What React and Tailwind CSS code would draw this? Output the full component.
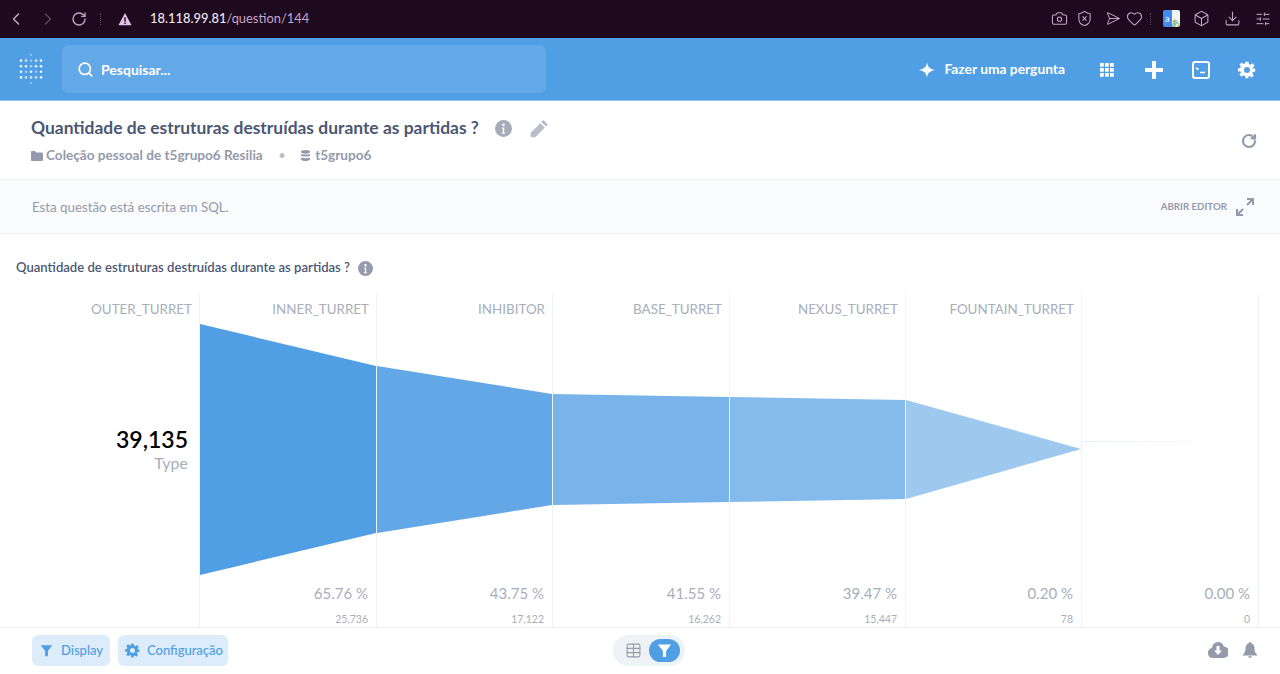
import React from "react";
import { ChevronLeft, ChevronRight, RotateCw, Camera, ShieldX, Send, Heart, Box, Download, SlidersHorizontal, Search, Table } from "lucide-react";

const Info = ({ className }) => (
  <svg viewBox="0 0 16 16" className={className} fill="currentColor">
    <path fillRule="evenodd" d="M8 0a8 8 0 1 1 0 16A8 8 0 0 1 8 0zm0 3.200a1.300 1.300 0 1 0 0 2.600 1.300 1.300 0 0 0 0-2.600zM6.600 7v1h.7v4H6.400v1h3.200v-1h-.9V7z" />
  </svg>
);
const Gear = ({ className }) => (
  <svg viewBox="0 0 24 24" className={className} fill="currentColor">
    <path fillRule="evenodd" d="M10 1h4l.6 3.200 1.900.8 2.700-1.900 2.800 2.800-1.900 2.700.8 1.900L23 10v4l-3.100.6-.8 1.900 1.900 2.700-2.800 2.800-2.700-1.900-1.900.8L14 23h-4l-.6-3.100-1.900-.8-2.700 1.900-2.800-2.800 1.900-2.700-.8-1.900L0 14v-4l3.100-.6.8-1.900L2 4.900l2.800-2.800 2.700 1.900 1.900-.8zM12 8a4 4 0 1 0 0 8 4 4 0 0 0 0-8z" />
  </svg>
);
const Funnel = ({ className }) => (
  <svg viewBox="0 0 16 16" className={className} fill="currentColor">
    <path d="M1 1.500h14L9.700 8.500V15H6.300V8.500z" />
  </svg>
);
const Logo = () => {
  const dots = [
    [2,0,.3],[2,1,.4],
    [0,1,.9],[1,1,.75],[3,1,.75],[4,1,.9],
    [0,2,.9],[1,2,.9],[2,2,.55],[3,2,.9],[4,2,.9],
    [0,3,.9],[1,3,.45],[2,3,.9],[3,3,.45],[4,3,.9],
    [0,4,.9],[1,4,.7],[2,4,.7],[3,4,.7],[4,4,.9],
    [2,5,.3],
  ];
  return (
    <svg viewBox="0 0 24 32" className="h-[32px] w-[24px]">
      {dots.map(([x, y, o], i) => (
        <circle key={i} cx={2 + x * 5} cy={2 + y * 5.600} r="1.300" fill="#fff" opacity={o} />
      ))}
    </svg>
  );
};

const cols = [
  { w: "w-[200px]", label: "OUTER_TURRET" },
  { w: "w-[177px]", label: "INNER_TURRET", pct: "65.76 %", n: "25,736" },
  { w: "w-[176px]", label: "INHIBITOR", pct: "43.75 %", n: "17,122" },
  { w: "w-[177px]", label: "BASE_TURRET", pct: "41.55 %", n: "16,262" },
  { w: "w-[176px]", label: "NEXUS_TURRET", pct: "39.47 %", n: "15,447" },
  { w: "w-[176px]", label: "FOUNTAIN_TURRET", pct: "0.20 %", n: "78" },
  { w: "w-[177px]", label: "", pct: "0.00 %", n: "0" },
];

export default function App() {
  return (
    <div className="flex h-[674px] w-[1280px] flex-col overflow-hidden bg-white font-['Lato','Noto_Sans',sans-serif]">
      <div className="flex h-[38px] shrink-0 items-center bg-[#1e0a1f] pb-[1px] pl-[6px] pr-[9px] text-[#c5a5c9]">
        <ChevronLeft className="h-[20px] w-[20px]" strokeWidth={1.8} />
        <ChevronRight className="ml-[12px] h-[20px] w-[20px] text-[#5b465e]" strokeWidth={1.8} />
        <RotateCw className="ml-[13px] h-[16px] w-[16px]" strokeWidth={2} />
        <div className="ml-[13px] h-[12px] border-l border-dotted border-[#5b465e]" />
        <svg viewBox="0 0 16 16" className="ml-[17px] h-[14px] w-[14px] text-[#e0bfe4]" fill="currentColor">
          <path fillRule="evenodd" d="M8 1l7.500 14H.5zM7.200 6v5h1.600V6zm0 6v1.600h1.600V12z" />
        </svg>
        <span className="ml-[18px] text-[12.900px] font-medium text-[#f0e6f1]">18.118.99.81</span>
        <span className="text-[12.900px] text-[#c5a5c9]">/question/144</span>
        <div className="ml-auto flex items-center">
          <Camera className="h-[17px] w-[17px]" strokeWidth={1.5} />
          <ShieldX className="ml-[8px] h-[17px] w-[17px]" strokeWidth={1.5} />
          <Send className="ml-[10px] h-[15px] w-[15px] rotate-45" strokeWidth={1.5} />
          <Heart className="ml-[8px] h-[17px] w-[17px]" strokeWidth={1.5} />
          <div className="ml-[7px] h-[12px] border-l border-dotted border-[#5b465e]" />
          <div className="ml-[12px] flex h-[17px] w-[17px] overflow-hidden rounded-[2px]">
            <div className="flex w-1/2 items-center justify-center bg-[#3f8cf0] text-[9px] leading-none text-white">a</div>
            <div className="flex w-1/2 items-end justify-center bg-[#f4f4f4] text-[9px] leading-none text-[#4c9a3c]">あ</div>
          </div>
          <Box className="ml-[13px] h-[17px] w-[17px]" strokeWidth={1.5} />
          <Download className="ml-[14px] h-[17px] w-[17px]" strokeWidth={1.5} />
          <SlidersHorizontal className="ml-[14px] h-[16px] w-[16px]" strokeWidth={1.5} />
        </div>
      </div>

      <div className="flex h-[63px] shrink-0 items-center border-b border-[#8fc2ee] bg-[#509ee3] pl-[19px] pr-[24px] text-white">
        <Logo />
        <div className="ml-[19px] flex h-[48px] w-[484px] items-center rounded-[6px] bg-[#63a8e7] pl-[15px]">
          <Search className="h-[17px] w-[17px]" strokeWidth={2.4} />
          <span className="ml-[7px] text-[14px] font-bold">Pesquisar...</span>
        </div>
        <div className="ml-auto mt-[1px] flex items-center">
          <svg viewBox="0 0 16 16" className="h-[16px] w-[16px]" fill="currentColor">
            <path d="M8 0c.6 4.800 2.600 7 8 8-5.400 1-7.400 3.200-8 8-.6-4.800-2.600-7-8-8 5.400-1 7.400-3.200 8-8z" />
          </svg>
          <span className="ml-[9px] text-[13.800px] font-bold">Fazer uma pergunta</span>
          <svg viewBox="0 0 14 14" className="ml-[35px] h-[14px] w-[14px]" fill="currentColor">
            {[0, 5, 10].flatMap((y) => [0, 5, 10].map((x) => <rect key={`${x}-${y}`} x={x} y={y} width="3.800" height="3.800" rx=".5" />))}
          </svg>
          <svg viewBox="0 0 18 18" className="ml-[31px] h-[18px] w-[18px]" fill="currentColor">
            <path d="M7 0h4v7h7v4h-7v7H7v-7H0V7h7z" />
          </svg>
          <svg viewBox="0 0 18 18" className="ml-[29px] h-[18px] w-[18px]" fill="none" stroke="currentColor" strokeWidth="2">
            <rect x="1" y="1" width="16" height="16" rx="2" />
            <path d="M4 7l2.500 1.500M8 11.500h5" strokeWidth="1.600" />
          </svg>
          <Gear className="ml-[28px] h-[18px] w-[18px]" />
        </div>
      </div>

      <div className="flex h-[79px] shrink-0 items-center justify-between border-b border-[#eef0f2] pl-[31px] pr-[23px]">
        <div>
          <div className="flex items-center pt-[1px]">
            <span className="text-[17.450px] font-bold text-[#4c5773]">Quantidade de estruturas destruídas durante as partidas ?</span>
            <Info className="ml-[16px] h-[17px] w-[17px] text-[#a6adba]" />
            <svg viewBox="0 0 16 16" className="ml-[18px] h-[19px] w-[19px] text-[#b8bdc8]" fill="currentColor">
              <path d="M11.300.9l3.800 3.800-1.700 1.700-3.800-3.800zM8.700 3.500l3.800 3.800L4.400 15.400H.6v-3.800z" />
            </svg>
          </div>
          <div className="mt-[4px] flex items-center text-[13.600px] font-bold text-[#949aab]">
            <svg viewBox="0 0 12 10" className="h-[10px] w-[12px]" fill="currentColor">
              <path d="M0 1a1 1 0 0 1 1-1h3l1 1.500h6a1 1 0 0 1 1 1V9a1 1 0 0 1-1 1H1a1 1 0 0 1-1-1z" />
            </svg>
            <span className="ml-[3px]">Coleção pessoal de t5grupo6 Resilia</span>
            <span className="ml-[16px] text-[11px] text-[#b8bdc8]">•</span>
            <svg viewBox="0 0 10 12" className="ml-[15px] h-[11px] w-[11px]" fill="currentColor">
              <ellipse cx="5" cy="2" rx="5" ry="2" />
              <path d="M0 4c1 1.300 9 1.300 10 0v2c-1 1.500-9 1.500-10 0zM0 8c1 1.300 9 1.300 10 0v2c-1 2.600-9 2.600-10 0z" />
            </svg>
            <span className="ml-[4px]">t5grupo6</span>
          </div>
        </div>
        <RotateCw className="mt-[1px] h-[16px] w-[16px] text-[#949aab]" strokeWidth={3.2} />
      </div>

      <div className="flex h-[54px] shrink-0 items-center justify-between border-b border-[#eef0f2] bg-[#f9fbfc] pl-[32px] pr-[26px]">
        <span className="pt-[2px] text-[13.300px] text-[#949aab]">Esta questão está escrita em SQL.</span>
        <div className="flex items-center">
          <span className="text-[9.700px] font-bold text-[#949aab]">ABRIR EDITOR</span>
          <svg viewBox="0 0 18 18" className="ml-[9px] h-[18px] w-[18px] text-[#949aab]" fill="none" stroke="currentColor" strokeWidth="2">
            <path d="M11 1h6v6M17 1l-6 6M7 17H1v-6M1 17l6-6" />
          </svg>
        </div>
      </div>

      <div className="flex h-[60px] shrink-0 items-center pl-[16px] pt-[8px]">
        <span className="text-[13.100px] font-semibold text-[#4c5773]">Quantidade de estruturas destruídas durante as partidas ?</span>
        <Info className="ml-[8px] h-[15px] w-[15px] text-[#949aab]" />
      </div>

      <div className="relative flex min-h-0 flex-1">
        {cols.map((c, i) => (
          <div key={i} className={`${c.w} flex shrink-0 flex-col items-end border-r border-[#eef0f2] pr-[7px] pt-[7px] text-[#a9aeba]`}>
            <span className="h-[17px] text-[13.400px] leading-[17px]">{c.label}</span>
            {i === 0 ? (
              <div className="mt-[107px] flex flex-col items-end pr-[4px]">
                <span className="text-[23px] font-semibold leading-[29px] text-black">39,135</span>
                <span className="text-[16px] leading-[17px] text-[#a9aeba]">Type</span>
              </div>
            ) : (
              <div className="mt-[266px] flex flex-col items-end pr-[1px]">
                <span className="text-[15px] leading-[18px]">{c.pct}</span>
                <span className="mt-[10px] text-[10.500px] leading-[14px]">{c.n}</span>
              </div>
            )}
          </div>
        ))}
        <svg className="pointer-events-none absolute left-0 top-0 h-[334px] w-[1280px]" viewBox="0 294 1280 334">
          <defs>
            <linearGradient id="fade" x1="0" x2="1" y1="0" y2="0">
              <stop offset="0" stopColor="#e4eef8" />
              <stop offset="1" stopColor="#ffffff" />
            </linearGradient>
          </defs>
          <polygon points="200,324 376,366 376,533 200,575" fill="#509ee3" />
          <polygon points="377,366 552,394 552,505 377,533" fill="#62a8e6" />
          <polygon points="553,394 729,397 729,502 553,505" fill="#78b4ea" />
          <polygon points="730,397 905,400 905,499 730,502" fill="#84bbec" />
          <polygon points="906,400 1081,449 906,499" fill="#9dc9ef" />
          <rect x="1082" y="441" width="150" height="1" fill="url(#fade)" />
        </svg>
      </div>

      <div className="relative flex h-[47px] shrink-0 items-center justify-between border-t border-[#eef0f2] bg-white pb-[2px] pl-[32px] pr-[23px]">
        <div className="flex items-center gap-[8px]">
          <div className="flex h-[31px] w-[78px] items-center rounded-[6px] bg-[#ddecfa] pl-[8px] text-[13px] font-medium text-[#509ee3]">
            <Funnel className="h-[13px] w-[13px]" />
            <span className="ml-[8px] pt-[2px]">Display</span>
          </div>
          <div className="flex h-[31px] w-[110px] items-center rounded-[6px] bg-[#ddecfa] pl-[7px] text-[13px] font-medium text-[#509ee3]">
            <Gear className="h-[15px] w-[15px]" />
            <span className="ml-[7px] pt-[2px]">Configuração</span>
          </div>
        </div>
        <div className="absolute left-[613px] top-[7px] flex h-[31px] w-[72px] items-center rounded-full bg-[#edf2f5] pl-[12px]">
          <Table className="h-[17px] w-[17px] text-[#949aab]" strokeWidth={1.5} />
          <div className="ml-[7px] flex h-[23px] w-[31px] items-center justify-center rounded-full bg-[#509ee3]">
            <Funnel className="h-[15px] w-[15px] text-white" />
          </div>
        </div>
        <div className="flex items-center text-[#949aab]">
          <svg viewBox="0 0 20 16" className="h-[16px] w-[20px]" fill="currentColor">
            <path fillRule="evenodd" d="M10 0a6 6 0 0 1 5.800 4.500A5.500 5.500 0 0 1 15 16H5a5 5 0 0 1-1-9.900A6 6 0 0 1 10 0zM8.500 4v4.500H6l4 4.500 4-4.500h-2.500V4z" />
          </svg>
          <svg viewBox="0 0 14 16" className="ml-[15px] h-[16px] w-[14px]" fill="currentColor">
            <path d="M7 0c.8 0 1.200.6 1.200 1.300C10.500 2 11.500 4 11.500 6.500c0 3 .8 4.500 2.500 6v1H0v-1c1.700-1.500 2.500-3 2.500-6 0-2.500 1-4.500 3.300-5.200C5.800.6 6.200 0 7 0zM5.200 14.300h3.600C8.700 15.300 8 16 7 16s-1.700-.7-1.800-1.700z" />
          </svg>
        </div>
      </div>
    </div>
  );
}
